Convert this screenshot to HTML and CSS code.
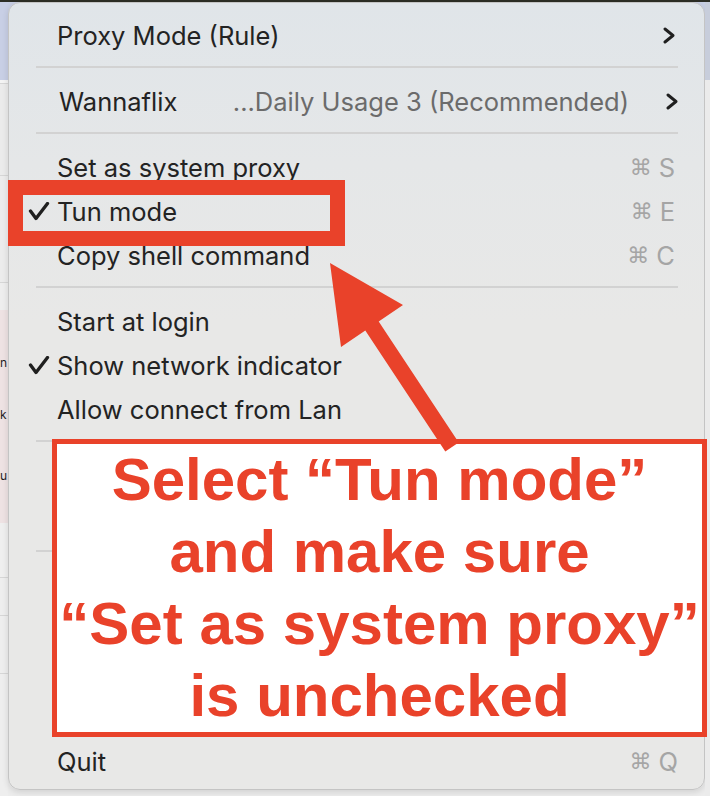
FILE: index.html
```html
<!DOCTYPE html>
<html lang="en">
<head>
<meta charset="utf-8">
<title>Menu</title>
<link rel="stylesheet" href="styles.css">
</head>
<body>
<div class="stage">
  <div class="side side-left">
    <div class="blk b1"></div>
    <div class="blk b2 line"></div>
    <div class="blk b3 line"></div>
    <div class="blk b4 line"></div>
    <div class="blk b5"></div>
    <div class="blk b6">
      <div class="frag f1">n</div>
      <div class="frag f2">k</div>
      <div class="frag f3">u</div>
    </div>
    <div class="blk b7 line"></div>
    <div class="blk b8 line"></div>
    <div class="blk b9 line"></div>
    <div class="blk b10"></div>
  </div>

  <div class="menu">
    <div class="row">
      <span class="check"></span>
      <span class="label">Proxy Mode (Rule)</span>
      <svg class="chev" width="12" height="17" viewBox="0 0 12 17"><polyline points="2,2 10,8.5 2,15"/></svg>
    </div>
    <div class="sep"></div>
    <div class="row row-shift">
      <span class="check"></span>
      <span class="label">Wannaflix</span>
      <span class="value">...Daily Usage 3 (Recommended)</span>
      <svg class="chev" width="12" height="17" viewBox="0 0 12 17"><polyline points="2,2 10,8.5 2,15"/></svg>
    </div>
    <div class="sep"></div>
    <div class="row">
      <span class="check"></span>
      <span class="label">Set as system proxy</span>
      <span class="key"><span class="cmd">⌘</span><span>S</span></span>
    </div>
    <div class="row">
      <span class="check"><svg width="22" height="19" viewBox="0 0 22 19"><polyline points="2.5,9 8,16.5 19.5,1.5"/></svg></span>
      <span class="label">Tun mode</span>
      <span class="key"><span class="cmd">⌘</span><span>E</span></span>
    </div>
    <div class="row">
      <span class="check"></span>
      <span class="label">Copy shell command</span>
      <span class="key"><span class="cmd">⌘</span><span>C</span></span>
    </div>
    <div class="sep"></div>
    <div class="row">
      <span class="check"></span>
      <span class="label">Start at login</span>
    </div>
    <div class="row">
      <span class="check"><svg width="22" height="19" viewBox="0 0 22 19"><polyline points="2.5,9 8,16.5 19.5,1.5"/></svg></span>
      <span class="label">Show network indicator</span>
    </div>
    <div class="row">
      <span class="check"></span>
      <span class="label">Allow connect from Lan</span>
    </div>
    <div class="sep"></div>
    <div class="row"></div>
    <div class="row"></div>
    <div class="sep"></div>
    <div class="row"></div>
    <div class="row"></div>
    <div class="row"></div>
    <div class="row"></div>
    <div class="row">
      <span class="check"></span>
      <span class="label">Quit</span>
      <span class="key key-q"><span class="cmd">⌘</span><span>Q</span></span>
    </div>
  </div>

  <div class="side side-right"></div>
</div>

<div class="mark-box"></div>

<div class="note">
  <p class="note-line">Select “Tun mode”</p>
  <p class="note-line">and make sure</p>
  <p class="note-line">“Set as system proxy”</p>
  <p class="note-line">is unchecked</p>
</div>

<svg class="arrow" width="710" height="796" viewBox="0 0 710 796">
  <polygon points="330,263 403,305 378.7,321.6 458.7,442.6 445.3,451.4 365.3,330.4 341,347"/>
</svg>
</body>
</html>
```

FILE: styles.css
```css
html, body {
  margin: 0;
  padding: 0;
}

body {
  width: 710px;
  height: 796px;
  overflow: hidden;
  position: relative;
  background: linear-gradient(to bottom, #2c2e25 0, #2c2e25 2px, #c8cfe4 2px, #cdd3e3 80px, #ececec 80px);
  font-family: "Inter", "Noto Sans", sans-serif;
}

.stage {
  display: flex;
  margin-top: 2px;
  height: 794px;
}

/* background page peeking at the sides */
.side {
  flex: none;
  display: flex;
  flex-direction: column;
  overflow: hidden;
}

.side-left {
  width: 8px;
}

.side-right {
  width: 5px;
  background: linear-gradient(to bottom, #c7cddb 0, #c7cddb 78px, #ebebeb 78px);
}

.blk {
  flex: none;
  box-sizing: border-box;
}

.line {
  border-bottom: 1px solid #d6d6d6;
}

.b1 { height: 78px; background: #c8cfe5; }
.b2 { height: 4px; background: #f4f4f4; }
.b3 { height: 92px; background: #ebebeb; }
.b4 { height: 107px; background: #ececec; }
.b5 { height: 27px; background: #eeeeee; }
.b6 { height: 213px; background: #eee2e3; padding-top: 45px; }
.b7 { height: 55px; background: #efefef; }
.b8 { height: 38px; background: #eeeeee; }
.b9 { height: 58px; background: #eeeeee; }
.b10 { flex: 1; background: #eeeeee; }

.frag {
  font-size: 12px;
  color: #1e1e1e;
  text-align: left;
  white-space: nowrap;
  line-height: 16px;
  height: 16px;
}

.f2 { margin-top: 36px; }
.f3 { margin-top: 45px; }

/* the menu */
.menu {
  flex: none;
  width: 697px;
  height: 788px;
  box-sizing: border-box;
  padding: 10px 29px 6px 19px;
  border: 1px solid #c4c4c4;
  border-radius: 12px;
  background: linear-gradient(to bottom, #e0e5e9 0, #e5e7e8 160px, #e8e8e7 320px, #e8e8e7 100%);
  box-shadow: 0 2px 6px rgba(0, 0, 0, 0.12);
  display: flex;
  flex-direction: column;
  color: #232323;
  font-size: 25.5px;
}

.row {
  flex: none;
  height: 44px;
  display: flex;
  align-items: center;
  white-space: nowrap;
}

.check {
  flex: none;
  width: 29px;
  height: 19px;
  display: flex;
  align-items: center;
}

.check svg polyline {
  fill: none;
  stroke: #1f1f1f;
  stroke-width: 3.3;
  stroke-linecap: round;
  stroke-linejoin: round;
}

.label {
  flex: 1;
}

.value {
  color: #6b6b6b;
  margin-right: 37px;
}

.chev {
  flex: none;
}

.chev polyline {
  fill: none;
  stroke: #1f1f1f;
  stroke-width: 2.9;
  stroke-linecap: round;
  stroke-linejoin: round;
}

.row-shift .label {
  padding-left: 2px;
}

.row-shift .chev {
  margin-right: -3px;
}

.key {
  display: flex;
  align-items: center;
  gap: 7px;
  color: #a5a5a5;
}

.key-q {
  margin-right: -3px;
}

.cmd {
  font-family: "DejaVu Sans", sans-serif;
  font-size: 22px;
}

.sep {
  flex: none;
  height: 2px;
  margin: 9px -3px 11px 8px;
  background: #d2d2d2;
}

/* annotations drawn over the screenshot */
.mark-box {
  position: absolute;
  left: 8px;
  top: 180px;
  width: 337px;
  height: 66px;
  box-sizing: border-box;
  border: 15px solid #e9422a;
}

.note {
  position: absolute;
  left: 52px;
  top: 439px;
  width: 655px;
  height: 298px;
  box-sizing: border-box;
  border: 5px solid #e9422a;
  background: #ffffff;
  font-family: "Liberation Sans", Arial, sans-serif;
  font-weight: bold;
  font-size: 60px;
  color: #e9422a;
  text-align: center;
}

.note-line {
  margin: 0;
  height: 72px;
  line-height: 72px;
  white-space: nowrap;
}

.arrow {
  position: absolute;
  left: 0;
  top: 0;
  pointer-events: none;
}

.arrow polygon {
  fill: #e9422a;
}
```
